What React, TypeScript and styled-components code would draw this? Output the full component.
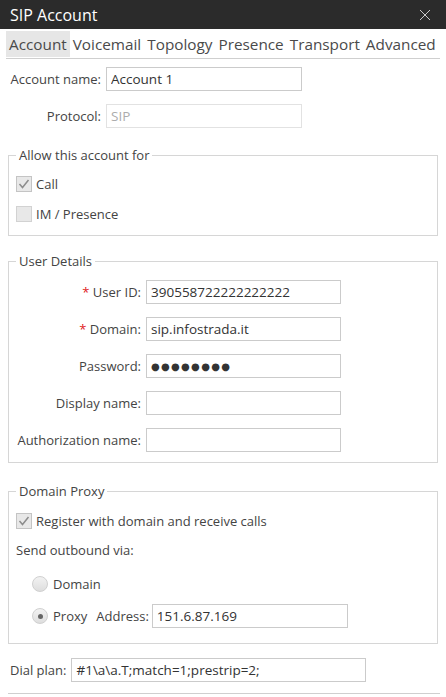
import styled, { createGlobalStyle } from 'styled-components';

const GlobalStyle = createGlobalStyle`
  body {
    margin: 0;
    background: #ffffff;
    font-family: "Open Sans", "Noto Sans", sans-serif;
    color: #3a3a3a;
  }
`;

const CloseIcon: React.FC = () => (
  <svg width="12" height="12" viewBox="0 0 12 12">
    <path d="M1 1 L11 11 M11 1 L1 11" stroke="#c8c8c8" strokeWidth="1" fill="none" />
  </svg>
);

const CheckIcon: React.FC = () => (
  <svg width="12" height="12" viewBox="0 0 12 12">
    <path d="M1.5 6 L4.5 9.5 L10.5 2" stroke="#8c8c8c" strokeWidth="1.5" fill="none" />
  </svg>
);

const tabs = ['Account', 'Voicemail', 'Topology', 'Presence', 'Transport', 'Advanced'];

const App: React.FC = () => {
  return (
    <>
      <GlobalStyle />
      <Window>
        <TitleBar>
          <span>SIP Account</span>
          <CloseButton>
            <CloseIcon />
          </CloseButton>
        </TitleBar>

        <TabBar>
          {tabs.map((t, i) => (
            <Tab key={t} $active={i === 0}>
              {t}
            </Tab>
          ))}
        </TabBar>

        <Content>
          <TopGrid>
            <Label>Account name:</Label>
            <Input defaultValue="Account 1" readOnly />
            <Label>Protocol:</Label>
            <Input defaultValue="SIP" disabled />
          </TopGrid>

          <Group $mt={18}>
            <Legend>Allow this account for</Legend>
            <CheckRow $mt={8}>
              <Check $checked>
                <CheckIcon />
              </Check>
              Call
            </CheckRow>
            <CheckRow $mt={6}>
              <Check />
              IM / Presence
            </CheckRow>
          </Group>

          <Group $mt={16} $pb={10}>
            <Legend>User Details</Legend>
            <DetailsGrid>
              <Label>
                <Req>*</Req> User ID:
              </Label>
              <Input defaultValue="390558722222222222" readOnly />
              <Label>
                <Req>*</Req> Domain:
              </Label>
              <Input defaultValue="sip.infostrada.it" readOnly />
              <Label>Password:</Label>
              <Input defaultValue="●●●●●●●●" readOnly $dots />
              <Label>Display name:</Label>
              <Input defaultValue="" readOnly />
              <Label>Authorization name:</Label>
              <Input defaultValue="" readOnly />
            </DetailsGrid>
          </Group>

          <Group $mt={19} $pb={15}>
            <Legend>Domain Proxy</Legend>
            <CheckRow $mt={9}>
              <Check $checked>
                <CheckIcon />
              </Check>
              Register with domain and receive calls
            </CheckRow>
            <CheckRow $mt={5}>Send outbound via:</CheckRow>
            <RadioRow $mt={10}>
              <Radio />
              Domain
            </RadioRow>
            <RadioRow $mt={8}>
              <Radio $checked />
              Proxy
              <AddressLabel>Address:</AddressLabel>
              <Input defaultValue="151.6.87.169" readOnly $width={196} />
            </RadioRow>
          </Group>

          <DialRow>
            <DialLabel>Dial plan:</DialLabel>
            <Input defaultValue="#1\a\a.T;match=1;prestrip=2;" readOnly $width={295} />
          </DialRow>
          <BottomRule />
        </Content>
      </Window>
    </>
  );
};

const Window = styled.div`
  width: 446px;
  height: 697px;
  background: #ffffff;
  overflow: hidden;
`;

const TitleBar = styled.div`
  height: 29px;
  background: #2b2b2b;
  color: #ffffff;
  font-size: 16px;
  display: flex;
  align-items: center;
  justify-content: space-between;
  padding: 0 15px 0 10px;
`;

const CloseButton = styled.div`
  display: flex;
  align-items: center;
`;

const TabBar = styled.div`
  display: flex;
  margin: 2px 6px 0 6px;
  padding-bottom: 1px;
  border-bottom: 1px solid #cfcfcf;
`;

const Tab = styled.div<{ $active?: boolean }>`
  height: 26px;
  line-height: 26px;
  padding: 0 3px;
  font-size: 15.3px;
  color: #4a4a4a;
  background: ${(p) => (p.$active ? '#e6e6e6' : 'transparent')};
  white-space: nowrap;
`;

const Content = styled.div`
  padding: 0 6px 0 8px;
`;

const TopGrid = styled.div`
  display: grid;
  grid-template-columns: 91px 196px;
  column-gap: 5px;
  row-gap: 13px;
  align-items: center;
  margin: 8px 0 0 2px;
`;

const Label = styled.label`
  font-size: 13px;
  color: #444;
  text-align: right;
  white-space: nowrap;
`;

const Req = styled.span`
  color: #e02020;
`;

const Input = styled.input<{ $width?: number; $dots?: boolean }>`
  box-sizing: border-box;
  width: ${(p) => (p.$width ? `${p.$width}px` : '100%')};
  height: 24px;
  border: 1px solid #cbcbcb;
  padding: 0 4px;
  font-family: ${(p) => (p.$dots ? '"DejaVu Sans", sans-serif' : '"Open Sans", "Noto Sans", sans-serif')};
  font-size: ${(p) => (p.$dots ? '10px' : '13.5px')};
  letter-spacing: ${(p) => (p.$dots ? '1.3px' : 'normal')};
  color: #333;
  background: #fff;
  outline: none;

  &:disabled {
    border-color: #e2e2e2;
    color: #acacac;
  }
`;

const Group = styled.fieldset<{ $mt: number; $pb?: number }>`
  margin: ${(p) => p.$mt}px 0 0 0;
  width: 430px;
  box-sizing: border-box;
  border: 1px solid #d6d6d6;
  padding: 0 7px ${(p) => p.$pb ?? 9}px 7px;
  min-width: 0;
`;

const Legend = styled.legend`
  font-size: 13px;
  color: #444;
  padding: 0 3px;
  line-height: 18px;
`;

const CheckRow = styled.div<{ $mt: number }>`
  display: flex;
  align-items: center;
  height: 24px;
  margin-top: ${(p) => p.$mt}px;
  font-size: 13px;
  color: #444;
  gap: 4px;
`;

const Check = styled.span<{ $checked?: boolean }>`
  box-sizing: border-box;
  width: 16px;
  height: 16px;
  border: 1px solid ${(p) => (p.$checked ? '#c4c4c4' : '#d2d2d2')};
  background: #e8e8e8;
  display: flex;
  align-items: center;
  justify-content: center;
`;

const RadioRow = styled.div<{ $mt: number }>`
  display: flex;
  align-items: center;
  height: 24px;
  margin-top: ${(p) => p.$mt}px;
  padding-left: 16px;
  font-size: 13px;
  color: #444;
  gap: 5px;
`;

const Radio = styled.span<{ $checked?: boolean }>`
  box-sizing: border-box;
  width: 16px;
  height: 16px;
  border-radius: 50%;
  border: 1px solid #d0d0d0;
  background: linear-gradient(#f2f2f2, #dedede);
  display: flex;
  align-items: center;
  justify-content: center;

  &::after {
    content: '';
    display: ${(p) => (p.$checked ? 'block' : 'none')};
    width: 5px;
    height: 5px;
    border-radius: 50%;
    background: #666;
  }
`;

const AddressLabel = styled.span`
  margin-left: 4px;
  margin-right: -2px;
`;

const DetailsGrid = styled.div`
  display: grid;
  grid-template-columns: 125px 195px;
  column-gap: 5px;
  row-gap: 13px;
  align-items: center;
  margin-top: 10px;
`;

const DialRow = styled.div`
  display: flex;
  align-items: center;
  gap: 5px;
  margin: 14px 0 0 2px;
`;

const DialLabel = styled.span`
  font-size: 13px;
  color: #444;
`;

const BottomRule = styled.div`
  margin-top: 11px;
  width: 432px;
  border-top: 1px solid #cfcfcf;
`;

export default App;
